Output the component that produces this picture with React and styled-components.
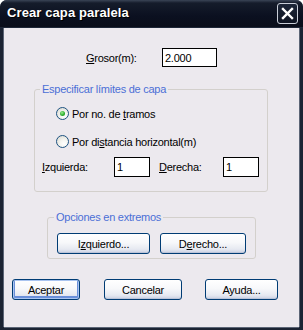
import React from "react";
import styled, { createGlobalStyle } from "styled-components";

const GlobalStyle = createGlobalStyle`
  html, body {
    margin: 0;
    padding: 0;
    background: #ffffff;
  }
  * {
    box-sizing: border-box;
  }
`;

const Window = styled.div`
  width: 303px;
  height: 330px;
  display: flex;
  flex-direction: column;
  background: #1b2333;
  border-radius: 7px 7px 0 0;
  overflow: hidden;
  font-family: "Liberation Sans", Arial, sans-serif;
  font-size: 11px;
  letter-spacing: -0.25px;
  color: #000;
`;

const TitleBar = styled.div`
  height: 28px;
  flex: none;
  display: flex;
  align-items: center;
  justify-content: space-between;
  padding: 0 5px 2px 7px;
  background: linear-gradient(#3a4456 0, #151c2b 3px, #0b1020 60%, #0a0e1a 100%);
  border-bottom: 1px solid #1e2738;
`;

const Title = styled.span`
  color: #ffffff;
  font-family: "Liberation Sans", Arial, sans-serif;
  font-weight: bold;
  font-size: 13px;
  letter-spacing: 0.1px;
  text-shadow: 1px 1px 0 #000;
`;

const CloseButton = styled.div`
  width: 21px;
  height: 21px;
  margin-top: 2px;
  border: 1px solid #c9ced8;
  border-radius: 3px;
  background: linear-gradient(#1d2638, #0e1422);
  display: flex;
  align-items: center;
  justify-content: center;
`;

const Body = styled.div`
  flex: 1;
  margin: 0 4px 3px 4px;
  background: #ece9ee;
  display: flex;
  flex-direction: column;
  box-shadow: -1px 0 0 #5c6576, 1px 0 0 #5c6576, 0 1px 0 #5c6576;
`;

const Row = styled.div`
  display: flex;
  align-items: center;
  margin-top: ${(p) => p.top || 0}px;
  margin-left: ${(p) => p.left || 0}px;
`;

const Label = styled.span`
  width: ${(p) => p.width}px;
  padding-left: ${(p) => p.indent || 0}px;
  flex: none;
  white-space: nowrap;
`;

const TextBox = styled.div`
  width: ${(p) => p.width}px;
  height: ${(p) => p.height || 20}px;
  flex: none;
  background: #ffffff;
  border: 1px solid #000000;
  padding: 1px 0 0 2px;
  line-height: 16px;
`;

const Group = styled.fieldset`
  margin: ${(p) => p.top}px 0 0 ${(p) => p.left}px;
  width: ${(p) => p.width}px;
  padding: 0 0 ${(p) => p.bottom}px 0;
  border: 1px solid #d3d0cc;
  border-radius: 3px;
  min-width: 0;
`;

const Legend = styled.legend`
  margin-left: ${(p) => p.offset}px;
  padding: 0 2px;
  color: #4b6fd6;
  line-height: 13px;
`;

const RadioRow = styled.label`
  display: flex;
  align-items: center;
  gap: 3px;
  height: 13px;
  margin-top: ${(p) => p.top}px;
  margin-left: 21px;
`;

const RadioCircle = styled.span`
  width: 13px;
  height: 13px;
  flex: none;
  border-radius: 50%;
  border: 1px solid #1d5281;
  background: radial-gradient(circle at 65% 70%, #ffffff 0, #f4f4ef 40%, #d6d6cd 100%);
  display: flex;
  align-items: center;
  justify-content: center;
`;

const RadioDot = styled.span`
  width: 5px;
  height: 5px;
  border-radius: 50%;
  background: radial-gradient(circle at 40% 35%, #9beb8f 0, #2fb02f 55%, #1a8a1a 100%);
`;

const Button = styled.div`
  width: ${(p) => p.width}px;
  height: ${(p) => p.height || 21}px;
  flex: none;
  margin-left: ${(p) => p.gap || 0}px;
  display: flex;
  align-items: center;
  justify-content: center;
  border: 1px solid #003c74;
  border-radius: 3px;
  background: linear-gradient(#ffffff 0, #f7f8fa 45%, #e6e9f1 80%, #c9d0e2 100%);
  box-shadow: ${(p) =>
    p.primary
      ? "inset 0 0 0 1px #a9c4f0, inset 0 -1px 0 2px #6b90da"
      : "inset 0 -1px 0 #bcc4d8"};
  white-space: nowrap;
`;

const Key = styled.span`
  text-decoration: underline;
  text-underline-offset: 1px;
`;

const Radio = ({ checked, top, children }) => (
  <RadioRow top={top}>
    <RadioCircle>{checked && <RadioDot />}</RadioCircle>
    <span>{children}</span>
  </RadioRow>
);

export default function App() {
  return (
    <>
      <GlobalStyle />
      <Window>
        <TitleBar>
          <Title>Crear capa paralela</Title>
          <CloseButton>
            <svg width="13" height="13" viewBox="0 0 13 13">
              <path
                d="M2 2 L11 11 M11 2 L2 11"
                stroke="#ffffff"
                strokeWidth="2.4"
                strokeLinecap="square"
              />
            </svg>
          </CloseButton>
        </TitleBar>
        <Body>
          <Row top={20} left={82}>
            <Label width={76}>
              <Key>G</Key>rosor(m):
            </Label>
            <TextBox width={55} height={19}>
              2.000
            </TextBox>
          </Row>

          <Group top={16} left={30} width={234} bottom={14}>
            <Legend offset={5}>Especificar límites de capa</Legend>
            <Radio checked top={11}>
              Por no. de <Key>t</Key>ramos
            </Radio>
            <Radio top={15}>
              Por di<Key>s</Key>tancia horizontal(m)
            </Radio>
            <Row top={9} left={7}>
              <Label width={72}>
                <Key>I</Key>zquierda:
              </Label>
              <TextBox width={36}>1</TextBox>
              <Label width={73} indent={9}>
                <Key>D</Key>erecha:
              </Label>
              <TextBox width={36}>1</TextBox>
            </Row>
          </Group>

          <Group top={19} left={43} width={209} bottom={4}>
            <Legend offset={6}>Opciones en extremos</Legend>
            <Row top={9} left={9}>
              <Button width={93}>
                I<Key>z</Key>quierdo...
              </Button>
              <Button width={86} gap={10}>
                D<Key>e</Key>recho...
              </Button>
            </Row>
          </Group>

          <Row top={20} left={8}>
            <Button width={68} primary>
              Aceptar
            </Button>
            <Button width={78} gap={24}>
              Cancelar
            </Button>
            <Button width={73} gap={23}>
              Ayuda...
            </Button>
          </Row>
        </Body>
      </Window>
    </>
  );
}
